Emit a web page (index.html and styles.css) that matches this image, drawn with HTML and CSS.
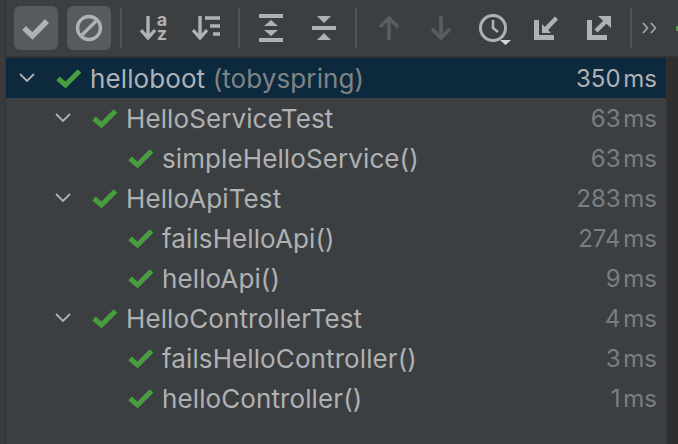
FILE: index.html
```html
<!DOCTYPE html>
<html lang="en">
<head>
  <meta charset="UTF-8">
  <title>Test Results</title>
  <link rel="stylesheet" href="styles.css">
</head>
<body>
  <svg class="defs" width="0" height="0">
    <symbol id="pass" viewBox="0 0 26 20">
      <path d="M2 10.5 L9.5 17 L23.5 3" fill="none" stroke="#499c3f" stroke-width="5"/>
    </symbol>
    <symbol id="chev" viewBox="0 0 18 12">
      <path d="M2 2 L9 9 L16 2" fill="none" stroke="#afb1b3" stroke-width="1.8"/>
    </symbol>
  </svg>
  <div class="window">
    <div class="rail"></div>
    <div class="main">
      <div class="toolbar">
        <span class="tool on">
          <svg width="28" height="26" viewBox="0 0 28 26"><path d="M2 13 L10.5 21 L25 6" fill="none" stroke="#afb1b3" stroke-width="5.5"/></svg>
        </span>
        <span class="tool on">
          <svg width="28" height="28" viewBox="0 0 28 28"><circle cx="14" cy="14" r="11.5" fill="none" stroke="#afb1b3" stroke-width="3.4"/><path d="M7 21 L21 7" stroke="#afb1b3" stroke-width="3.4"/></svg>
        </span>
        <i class="sep"></i>
        <span class="tool sort-alpha">
          <svg width="16" height="28" viewBox="0 0 16 28"><path d="M8 2 V24 M1 16 L8 24 L15 16" fill="none" stroke="#afb1b3" stroke-width="3.4"/></svg>
          <span class="sort-letters"><b>a</b><b>z</b></span>
        </span>
        <span class="tool">
          <svg width="28" height="28" viewBox="0 0 28 28"><path d="M8 2 V24 M1 16 L8 24 L15 16" fill="none" stroke="#afb1b3" stroke-width="3.4"/><path d="M13 4 H28 M18 12 H28 M21 20 H28" fill="none" stroke="#afb1b3" stroke-width="3.6"/></svg>
        </span>
        <i class="sep"></i>
        <span class="tool">
          <svg width="26" height="28" viewBox="0 0 26 28"><path d="M1 0 H25 V4 H1Z M1 24 H25 V28 H1Z M13 6 L20 12 H6Z M13 22 L20 16 H6Z" fill="#afb1b3"/></svg>
        </span>
        <span class="tool">
          <svg width="26" height="28" viewBox="0 0 26 28"><path d="M1 12 H25 V16 H1Z M6 2 H20 L13 9Z M13 19 L20 26 H6Z" fill="#afb1b3"/></svg>
        </span>
        <i class="sep"></i>
        <span class="tool">
          <svg width="22" height="26" viewBox="0 0 22 26"><path d="M11 25 V3 M2 12 L11 3 L20 12" fill="none" stroke="#5a5d5f" stroke-width="3.6"/></svg>
        </span>
        <span class="tool">
          <svg width="22" height="26" viewBox="0 0 22 26"><path d="M11 1 V23 M2 14 L11 23 L20 14" fill="none" stroke="#5a5d5f" stroke-width="3.6"/></svg>
        </span>
        <span class="tool">
          <svg width="34" height="34" viewBox="0 0 34 34"><circle cx="16" cy="17" r="12.5" fill="none" stroke="#afb1b3" stroke-width="3"/><path d="M16 9 V17 L21 21" fill="none" stroke="#afb1b3" stroke-width="2.6"/><path d="M23 29 H34 L28.5 34Z" fill="#d5d6d7"/></svg>
        </span>
        <span class="tool">
          <svg width="26" height="26" viewBox="0 0 26 26"><path d="M3.5 5 V22.5 H21" fill="none" stroke="#afb1b3" stroke-width="5"/><path d="M9 9 V18 H18Z" fill="#afb1b3"/><path d="M13 14 L23.5 3" stroke="#afb1b3" stroke-width="4.5"/></svg>
        </span>
        <span class="tool">
          <svg width="26" height="26" viewBox="0 0 26 26"><path d="M3.5 5 V22.5 H21" fill="none" stroke="#afb1b3" stroke-width="5"/><path d="M12 1 H25 V13Z" fill="#afb1b3"/><path d="M20 6 L10 16" stroke="#afb1b3" stroke-width="4.5"/></svg>
        </span>
        <i class="sep"></i>
        <span class="more">
          <svg width="16" height="12" viewBox="0 0 16 12"><path d="M1 1 L5.5 6 L1 11 M9 1 L13.5 6 L9 11" fill="none" stroke="#afb1b3" stroke-width="1.4"/></svg>
        </span>
        <i class="status-dot"></i>
      </div>
      <div class="content">
        <ul class="tree">
          <li class="row selected level-0">
            <svg class="chev"><use href="#chev"/></svg>
            <svg class="check"><use href="#pass"/></svg>
            <span class="name">helloboot <em>(tobyspring)</em></span>
            <span class="time">350 ms</span>
          </li>
          <li class="row level-1">
            <svg class="chev"><use href="#chev"/></svg>
            <svg class="check"><use href="#pass"/></svg>
            <span class="name">HelloServiceTest</span>
            <span class="time">63 ms</span>
          </li>
          <li class="row level-2">
            <svg class="check"><use href="#pass"/></svg>
            <span class="name">simpleHelloService()</span>
            <span class="time">63 ms</span>
          </li>
          <li class="row level-1">
            <svg class="chev"><use href="#chev"/></svg>
            <svg class="check"><use href="#pass"/></svg>
            <span class="name">HelloApiTest</span>
            <span class="time">283 ms</span>
          </li>
          <li class="row level-2">
            <svg class="check"><use href="#pass"/></svg>
            <span class="name">failsHelloApi()</span>
            <span class="time">274 ms</span>
          </li>
          <li class="row level-2">
            <svg class="check"><use href="#pass"/></svg>
            <span class="name">helloApi()</span>
            <span class="time">9 ms</span>
          </li>
          <li class="row level-1">
            <svg class="chev"><use href="#chev"/></svg>
            <svg class="check"><use href="#pass"/></svg>
            <span class="name">HelloControllerTest</span>
            <span class="time">4 ms</span>
          </li>
          <li class="row level-2">
            <svg class="check"><use href="#pass"/></svg>
            <span class="name">failsHelloController()</span>
            <span class="time">3 ms</span>
          </li>
          <li class="row level-2">
            <svg class="check"><use href="#pass"/></svg>
            <span class="name">helloController()</span>
            <span class="time">1 ms</span>
          </li>
        </ul>
        <div class="side"></div>
      </div>
    </div>
  </div>
</body>
</html>
```
FILE: styles.css
```css
body {
  margin: 0;
  background-color: #3c3f41;
  font-family: Inter, "Liberation Sans", sans-serif;
  color: #afb1b3;
  overflow: hidden;
}

.defs {
  display: none;
}

.window {
  width: 678px;
  height: 444px;
  display: flex;
}

.rail {
  width: 5px;
  background-color: #393b3d;
  border-right: 1px solid #323436;
  flex: none;
}

.main {
  flex: 1;
  min-width: 0;
  display: flex;
  flex-direction: column;
}

.toolbar {
  height: 58px;
  padding-left: 8px;
  display: flex;
  align-items: center;
  gap: 8.5px;
  border-bottom: 2px solid #323436;
  box-sizing: border-box;
  flex: none;
}

.tool {
  width: 44px;
  height: 44px;
  border-radius: 6px;
  display: flex;
  align-items: center;
  justify-content: center;
  flex: none;
}

.tool.on {
  background-color: #575b5e;
}

.sort-alpha {
  gap: 1px;
}

.sort-letters {
  display: flex;
  flex-direction: column;
  font-size: 18px;
  line-height: 14px;
  margin-top: -2px;
}

.sort-letters b {
  display: block;
  text-align: center;
  width: 11px;
}

.sep {
  width: 2px;
  height: 40px;
  margin: 0 1px;
  background-color: #515355;
  flex: none;
}

.more {
  display: flex;
  flex: none;
}

.status-dot {
  width: 2px;
  height: 5px;
  margin-left: auto;
  background-color: #499c3f;
}

.content {
  flex: 1;
  display: flex;
}

.tree {
  list-style: none;
  width: 660px;
  margin: 0;
  padding: 0;
  flex: none;
}

.side {
  flex: 1;
  background-color: #2e2e2e;
  border-left: 1px solid #333333;
}

.row {
  height: 40px;
  display: flex;
  align-items: center;
  font-size: 26px;
  letter-spacing: 0.1px;
  padding-right: 9px;
}

.selected {
  background-color: #0d293e;
}

.chev {
  width: 18px;
  height: 12px;
}

.check {
  width: 26px;
  height: 20px;
  margin-right: 8px;
}

.level-0 { padding-left: 12px; }
.level-1 { padding-left: 48px; }
.level-2 { padding-left: 122px; }

.level-0 .chev, .level-1 .chev {
  margin-right: 20px;
}

.name em {
  font-style: normal;
  color: #808386;
}

.time {
  margin-left: auto;
  font-size: 24px;
  letter-spacing: 0;
  word-spacing: -4px;
  color: #7b7e81;
}

.selected .time {
  color: #afb1b3;
}
```
